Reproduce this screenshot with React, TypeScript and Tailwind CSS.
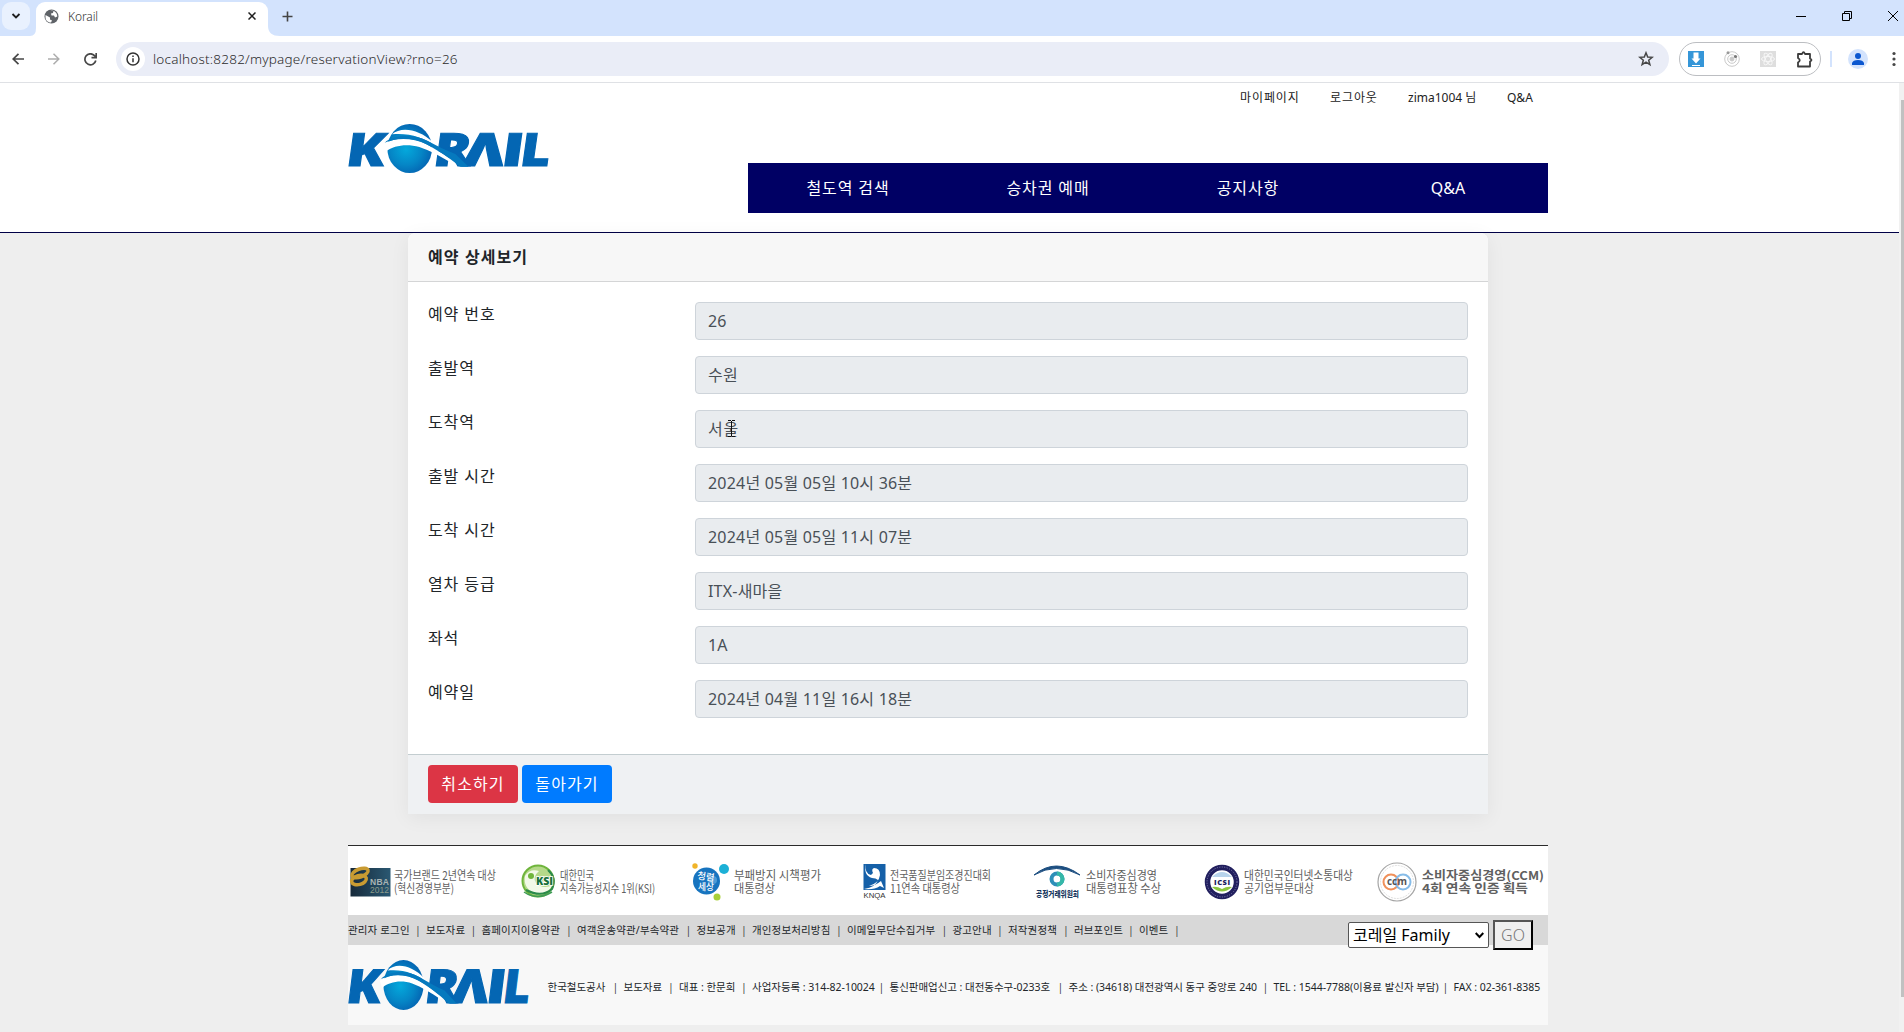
import React from "react";

const rows: [string, string][] = [
  ["예약 번호", "26"],
  ["출발역", "수원"],
  ["도착역", "서울"],
  ["출발 시간", "2024년 05월 05일 10시 36분"],
  ["도착 시간", "2024년 05월 05일 11시 07분"],
  ["열차 등급", "ITX-새마을"],
  ["좌석", "1A"],
  ["예약일", "2024년 04월 11일 16시 18분"],
];

const links: [string, string][] = [
  ["관리자 로그인", "w-[67px]"],
  ["보도자료", "w-[44.5px]"],
  ["홈페이지이용약관", "w-[84.5px]"],
  ["여객운송약관/부속약관", "w-[108.5px]"],
  ["정보공개", "w-[44.5px]"],
  ["개인정보처리방침", "w-[84px]"],
  ["이메일무단수집거부", "w-[94.5px]"],
  ["광고안내", "w-[44.5px]"],
  ["저작권정책", "w-[55px]"],
  ["러브포인트", "w-[54px]"],
  ["이벤트", "w-[35px]"],
];

const company: [string, string][] = [
  ["한국철도공사", "w-[65px]"],
  ["보도자료", "w-[44.5px]"],
  ["대표 : 한문희", "w-[62px]"],
  ["사업자등록 : 314-82-10024", "w-[126.5px]"],
  ["통신판매업신고 : 대전동수구-0233호", "w-[168px]"],
  ["주소 : (34618) 대전광역시 동구 중앙로 240", "w-[194px]"],
  ["TEL : 1544-7788(이용료 발신자 부담)", "w-[169px]"],
  ["FAX : 02-361-8385", "w-[84px]"],
];

function KorailLogo({ className, id }: { className: string; id: string }) {
  return (
    <svg
      className={className}
      viewBox="54 72 600 147"
      preserveAspectRatio="none"
      fontFamily="'Open Sans','Noto Sans',sans-serif"
      fontWeight="800"
      fontSize="138"
      fill="#0466b3"
    >
      <defs>
        <radialGradient id={id} gradientUnits="userSpaceOnUse" cx="228" cy="148" r="78">
          <stop offset="0" stopColor="#04a9dc" />
          <stop offset="0.6" stopColor="#0586c6" />
          <stop offset="1" stopColor="#0466b3" />
        </radialGradient>
      </defs>
      <g stroke="#0466b3" strokeWidth="3">
        <text transform="translate(44 199) skewX(-8)" textLength="116" lengthAdjust="spacingAndGlyphs">K</text>
        <text transform="translate(306 199) skewX(-8)" textLength="112" lengthAdjust="spacingAndGlyphs">R</text>
        <text transform="translate(396 199) skewX(-8)" textLength="122" lengthAdjust="spacingAndGlyphs">Λ</text>
        <text transform="translate(510 199) skewX(-8)" textLength="66" lengthAdjust="spacingAndGlyphs">I</text>
        <text transform="translate(566 199) skewX(-8)" textLength="90" lengthAdjust="spacingAndGlyphs">L</text>
      </g>
      <ellipse cx="239" cy="145.500" rx="67" ry="73.500" fill={`url(#${id})`} />
      <path d="M160 133C200 108 250 112 292 134C322 150 345 164 374 186L360 186C330 168 300 152 268 141C230 130 192 136 168 154Z" fill="#fff" />
      <path d="M186 103C214 78 268 88 308 126L318 138C280 112 236 98 186 103Z" fill="#fff" />
      <path d="M164 128C190 104 248 100 292 122C322 138 346 150 376 162L416 200H390C354 170 322 150 288 132C248 113 200 112 164 128Z" fill="#0579be" />
    </svg>
  );
}

function Lines({ x, w1, w2, a, b, bold }: { x: number; w1: number; w2: number; a: string; b: string; bold?: boolean }) {
  return (
    <g fill="#606060" fontSize="12" fontWeight={bold ? 600 : 400} fontFamily="'Noto Sans CJK KR',sans-serif">
      <text x={x} y="33.5" textLength={w1} lengthAdjust="spacingAndGlyphs">{a}</text>
      <text x={x} y="47" textLength={w2} lengthAdjust="spacingAndGlyphs">{b}</text>
    </g>
  );
}

const awardClass = "h-[69px] shrink-0";

function Awards() {
  return (
    <div className="flex h-[69px] bg-white">
      <svg className={awardClass} width="171" viewBox="0 0 171 69">
        <defs>
          <linearGradient id="nba" x1="0" x2="1">
            <stop offset="0" stopColor="#16293a" />
            <stop offset="1" stopColor="#2a5872" />
          </linearGradient>
        </defs>
        <rect x="2.500" y="22" width="40" height="28.500" fill="url(#nba)" />
        <g fill="none" stroke="#c99b32" strokeWidth="3.500">
          <ellipse cx="12" cy="27" rx="8.500" ry="4" transform="rotate(-20 12 27)" />
          <ellipse cx="11" cy="34" rx="7.500" ry="4.500" transform="rotate(-15 11 34)" />
        </g>
        <g fontFamily="'Liberation Sans',sans-serif" fontSize="8.500">
          <text x="22" y="39" fill="#a9b4b4" fontWeight="700" textLength="19">NBA</text>
          <text x="22" y="47" fill="#8b9a8a" textLength="19">2012</text>
        </g>
        <Lines x={46} w1={102} w2={60} a="국가브랜드 2년연속 대상" b="(혁신경영부분)" />
      </svg>
      <svg className={awardClass} width="171" viewBox="171 0 171 69">
        <circle cx="190" cy="35" r="15.500" fill="#b5d98a" stroke="#6fb53c" strokeWidth="2" />
        <path d="M177 30Q182 22 191 25Q184 31 188 37Q195 44 205 39Q198 50 186 47Q175 42 177 30Z" fill="#f2f9e8" />
        <circle cx="183" cy="30" r="3" fill="#6fb53c" />
        <path d="M200 24Q209 32 204 43Q194 52 178 44" fill="none" stroke="#2b8a4b" strokeWidth="2" />
        <path d="M176 46Q189 55 204 46" fill="none" stroke="#3f9b56" strokeWidth="1.500" />
        <text x="188" y="39" fontSize="10" fontWeight="800" fontFamily="'Open Sans',sans-serif" fill="#18703a" stroke="#fff" strokeWidth="1.500" paintOrder="stroke" textLength="17" lengthAdjust="spacingAndGlyphs">KSI</text>
        <Lines x={212} w1={34} w2={95} a="대한민국" b="지속가능성지수 1위(KSI)" />
      </svg>
      <svg className={awardClass} width="171" viewBox="342 0 171 69">
        <circle cx="358.500" cy="35" r="13.500" fill="#1774bf" />
        <circle cx="347" cy="20" r="2.700" fill="#f0b429" />
        <circle cx="376" cy="23" r="5" fill="#1cb0d6" />
        <circle cx="369" cy="51" r="3.500" fill="#a8cf38" />
        <circle cx="365" cy="34" r="4" fill="#4d9bd6" />
        <g fill="#fff" fontSize="9.500" fontWeight="500" fontFamily="'Noto Sans CJK KR',sans-serif">
          <text x="349" y="34" textLength="17" lengthAdjust="spacingAndGlyphs" transform="rotate(8 358 34)">청렴</text>
          <text x="350" y="44" textLength="16" lengthAdjust="spacingAndGlyphs">세상</text>
        </g>
        <Lines x={386} w1={87} w2={41} a="부패방지 시책평가" b="대통령상" />
      </svg>
      <svg className={awardClass} width="171" viewBox="513 0 171 69">
        <rect x="515.500" y="18" width="22" height="26" fill="#1560a8" />
        <path d="M518 18Q516 27 523 29L525 27Q523 23 526 22Q532 22 532 29Q531 37 521 40Q527 40 533 35L536 42L532 40Q526 44 516 43Q528 41 530 34Q528 32 524 32Q515 29 518 18Z" fill="#fff" />
        <text x="515.500" y="52" fontSize="8" fontFamily="'Liberation Sans',sans-serif" fill="#333" textLength="22" lengthAdjust="spacingAndGlyphs">KNQA</text>
        <Lines x={542} w1={101} w2={70} a="전국품질분임조경진대회" b="11연속 대통령상" />
      </svg>
      <svg className={awardClass} width="171" viewBox="684 0 171 69">
        <path d="M686 29Q708 11 732 29Q708 16 686 29Z" fill="#1c4e80" stroke="#1c4e80" />
        <circle cx="709" cy="33" r="5.500" fill="none" stroke="#2d8fb8" strokeWidth="4" />
        <path d="M709 27.500A5.500 5.500 0 0 1 709 38.500" fill="none" stroke="#35b8a8" strokeWidth="4" />
        <text x="688" y="50.500" fontSize="8" fontWeight="900" fontFamily="'Noto Sans CJK KR',sans-serif" fill="#17375e" textLength="43" lengthAdjust="spacingAndGlyphs">공정거래위원회</text>
        <Lines x={738} w1={71} w2={75} a="소비자중심경영" b="대통령표창 수상" />
      </svg>
      <svg className={awardClass} width="171" viewBox="855 0 171 69">
        <circle cx="874" cy="36" r="14.500" fill="#fff" stroke="#211f5e" strokeWidth="5.500" />
        <circle cx="874" cy="36" r="15" fill="none" stroke="#8583b5" strokeWidth="1" strokeDasharray="1 1.500" />
        <path d="M864 31Q874 21 884 31Z" fill="#b8d4ec" />
        <path d="M864 41Q874 50 884 41Q879 40 874 43Q869 40 864 41Z" fill="#8cc63f" />
        <text x="866" y="39" fontSize="7.500" fontWeight="800" fontFamily="'Open Sans',sans-serif" fill="#211f5e" textLength="16">ICSI</text>
        <Lines x={896} w1={109} w2={70} a="대한민국인터넷소통대상" b="공기업부문대상" />
      </svg>
      <svg className={awardClass} width="174" viewBox="1026 0 174 69">
        <circle cx="1049" cy="36" r="19" fill="none" stroke="#a5a5a5" strokeWidth="1.200" />
        <circle cx="1049" cy="36" r="16.500" fill="none" stroke="#d5d5d5" strokeWidth="0.800" strokeDasharray="2 1" />
        <circle cx="1043" cy="36" r="7.500" fill="none" stroke="#f0905a" strokeWidth="2" />
        <circle cx="1055" cy="36" r="7.500" fill="none" stroke="#86bce8" strokeWidth="2" />
        <text x="1039" y="39" fontSize="10" fontWeight="700" fontFamily="'Open Sans',sans-serif" fill="#555" textLength="20" lengthAdjust="spacingAndGlyphs">ccm</text>
        <Lines x={1074} w1={122} w2={106} a="소비자중심경영(CCM)" b="4회 연속 인증 획득" bold />
      </svg>
    </div>
  );
}

function Browser() {
  return (
    <div className="font-['Noto_Sans','Noto_Sans_CJK_KR',sans-serif]">
      <div className="flex h-9 bg-[#d3e3fd]">
        <div className="mt-[2px] ml-[2px] flex h-7 w-7 items-center justify-center rounded-[9px] bg-[#e9f1fe]">
          <svg width="10" height="10" viewBox="0 0 10 10" fill="none" stroke="#1f1f1f" strokeWidth="1.800">
            <path d="M1.500 3L5 6.500L8.500 3" />
          </svg>
        </div>
        <svg className="self-end" width="6" height="8" viewBox="0 0 6 8">
          <path d="M0 8Q6 8 6 0V8Z" fill="#fff" />
        </svg>
        <div className="mt-[2px] flex h-[34px] w-[232px] items-center rounded-t-[9px] bg-white pb-[5px]">
          <svg className="-mt-px ml-2" width="15" height="15" viewBox="0 0 15 15">
            <circle cx="7.500" cy="7.500" r="7" fill="#5f6368" />
            <path d="M1.500 6L6 8.500V10.500L8 11.500L7 13.500C3.500 13.500 1.500 11 1.500 8ZM6.500 1.800L9.500 1.800L9 4L7 4.500L7.500 6.500H10L11 8.500L13.300 7.500C13.300 4 10.500 1.500 7.500 1.500Z" fill="#fff" />
          </svg>
          <span className="ml-[9px] text-[12px] leading-4 font-light tracking-[-0.1px] text-[#333]">Korail</span>
          <svg className="-mt-px mr-3 ml-auto" width="8" height="8" viewBox="0 0 8 8" stroke="#1f1f1f" strokeWidth="1.500">
            <path d="M0.500 0.500L7.500 7.500M7.500 0.500L0.500 7.500" />
          </svg>
        </div>
        <svg className="self-end" width="12" height="10" viewBox="0 0 12 10">
          <path d="M0 0Q0 10 12 10H0Z" fill="#fff" />
        </svg>
        <svg className="mt-[11px] ml-[2px]" width="11" height="11" viewBox="0 0 11 11" stroke="#444" strokeWidth="1.600">
          <path d="M5.500 0.500V10.500M0.500 5.500H10.500" />
        </svg>
        <div className="mt-[11px] ml-auto flex items-start gap-9 pr-[6px]">
          <svg width="10" height="10" viewBox="0 0 10 10" shapeRendering="crispEdges">
            <path d="M0 5.500H10" stroke="#000" />
          </svg>
          <svg width="10" height="10" viewBox="0 0 10 10" fill="none" stroke="#000">
            <path d="M0.500 2.500H7.500V9.500H0.500ZM2.500 2.500V0.500H9.500V7.500H7.500" />
          </svg>
          <svg width="10" height="10" viewBox="0 0 10 10" stroke="#000">
            <path d="M0 0L10 10M10 0L0 10" />
          </svg>
        </div>
      </div>
      <div className="flex h-[47px] items-center border-b border-[#dfe1e5] bg-white">
        <svg className="ml-3" width="12" height="12" viewBox="0 0 12 12" fill="none" stroke="#474747" strokeWidth="1.700">
          <path d="M12 6H1M6.500 0.800L1.200 6L6.500 11.200" />
        </svg>
        <svg className="ml-6" width="12" height="12" viewBox="0 0 12 12" fill="none" stroke="#adadad" strokeWidth="1.500">
          <path d="M0 6H11M5.500 0.800L10.800 6L5.500 11.200" />
        </svg>
        <svg className="ml-6" width="13" height="13" viewBox="0 0 13 13" fill="none" stroke="#474747" strokeWidth="1.700">
          <path d="M11.800 7.500A5.500 5.500 0 1 1 10.500 2.600L12 4M12.200 0V4.700H7.500" />
        </svg>
        <div className="ml-[19px] flex h-[34px] w-[1553px] items-center rounded-full bg-[#eaedf7] pl-[5px]">
          <div className="flex h-6 w-6 items-center justify-center rounded-full bg-white">
            <svg width="14" height="14" viewBox="0 0 14 14" fill="none" stroke="#333" strokeWidth="1.500">
              <circle cx="7" cy="7" r="6" />
              <path d="M7 6.200V10.200M7 3.600V5" />
            </svg>
          </div>
          <span className="ml-2 text-[13.500px] font-light tracking-[0.22px] text-[#2a2a2a]">localhost:8282/mypage/reservationView?rno=26</span>
          <svg className="mr-[15px] ml-auto" width="16" height="16" viewBox="0 0 16 16" fill="none" stroke="#474747" strokeWidth="1.500">
            <path d="M8 1.800L9.700 6L14.200 6.300L10.700 9.200L11.900 13.700L8 11.200L4.100 13.700L5.300 9.200L1.800 6.300L6.300 6Z" />
          </svg>
        </div>
        <div className="ml-[10px] flex h-[34px] w-[142px] items-center rounded-full border border-[#bcbec2] pl-2">
          <svg width="16" height="16" viewBox="0 0 16 16">
            <rect width="16" height="16" fill="#3596d8" />
            <path d="M5.500 1.500H10.500V7.500H12.500L8 12.500L3.500 7.500H5.500ZM4 14H12V15H4Z" fill="#fff" />
          </svg>
          <svg className="ml-5" width="16" height="16" viewBox="0 0 16 16" fill="none" stroke="#c9c9c9">
            <circle cx="8" cy="8" r="7.300" />
            <circle cx="8" cy="8" r="4.300" />
            <circle cx="8" cy="8" r="2" fill="#c9c9c9" />
            <circle cx="11.500" cy="5.500" r="1.600" fill="#777" stroke="none" />
            <circle cx="4" cy="1.700" r="1.500" fill="#999" stroke="none" />
          </svg>
          <svg className="ml-5" width="16" height="16" viewBox="0 0 16 16" fill="none" stroke="#f8f8f8" strokeWidth="0.900">
            <rect width="16" height="16" fill="#dedede" stroke="none" />
            <ellipse cx="8" cy="8" rx="6.500" ry="2.600" />
            <ellipse cx="8" cy="8" rx="6.500" ry="2.600" transform="rotate(60 8 8)" />
            <ellipse cx="8" cy="8" rx="6.500" ry="2.600" transform="rotate(120 8 8)" />
          </svg>
          <svg className="ml-5" width="17" height="17" viewBox="0 0 17 17" fill="none" stroke="#3c3c3c" strokeWidth="1.800" strokeLinejoin="round">
            <path d="M2 3H6Q7.500 -0.500 9 3H14V7.500Q17 9 14 10.500V15.500H2V11.500Q5.500 9.200 2 7Z" />
          </svg>
        </div>
        <div className="ml-[9px] h-4 w-[2px] bg-[#d3e3fd]" />
        <div className="ml-4 flex h-5 w-5 items-center justify-center rounded-full bg-[#d3e3fd]">
          <svg width="12" height="12" viewBox="0 0 12 12" fill="#0b57d0">
            <circle cx="6" cy="3" r="3" />
            <path d="M0 12V10Q1 7 6 7Q11 7 12 10V12Z" />
          </svg>
        </div>
        <svg className="ml-6" width="4" height="16" viewBox="0 0 4 16" fill="#474747">
          <circle cx="2" cy="2.500" r="1.600" />
          <circle cx="2" cy="8" r="1.600" />
          <circle cx="2" cy="13.500" r="1.600" />
        </svg>
      </div>
    </div>
  );
}

export default function App() {
  return (
    <div className="h-[1032px] w-[1904px] overflow-hidden bg-[#eeeeee] font-['Noto_Sans','Noto_Sans_CJK_KR',sans-serif] text-[#212529]">
      <Browser />
      <div className="flex h-[949px]">
        <div className="w-[1899px]">
          <header className="h-[150px] border-b border-[#000046] bg-white pl-[348px]">
            <div className="flex w-[1200px] justify-between">
              <KorailLogo id="globe-top" className="mt-[41px] h-[49px] w-[200px] overflow-visible" />
              <div className="w-[800px]">
                <div className="flex h-[29px] pl-[492px] text-[12px] leading-[29px] text-[#222]">
                  <span className="w-[90px] tracking-[0.9px]">마이페이지</span>
                  <span className="w-[78px] tracking-[0.9px]">로그아웃</span>
                  <span className="w-[99px]">zima1004 님</span>
                  <span>Q&amp;A</span>
                </div>
                <nav className="mt-[51px] grid h-[50px] grid-cols-4 bg-[#000064] text-center text-[16px] leading-[50px] text-white">
                  <span className="tracking-[0.9px]">철도역 검색</span>
                  <span className="tracking-[0.9px]">승차권 예매</span>
                  <span className="tracking-[0.9px]">공지사항</span>
                  <span>Q&amp;A</span>
                </nav>
              </div>
            </div>
          </header>

          <main className="relative ml-[408px] h-[581px] w-[1080px] rounded-t-lg bg-white shadow-[0_4px_20px_rgba(0,0,0,0.06)]">
            <h1 className="h-[49px] rounded-t-lg border-b border-[#d4d5d6] bg-[#f7f7f7] pl-5 text-[16px] leading-[48px] font-semibold tracking-[1.1px]">예약 상세보기</h1>
            <div className="flex h-[472px] flex-col gap-4 px-5 pt-5">
              {rows.map(([label, value]) => (
                <div key={label} className="flex h-[38px]">
                  <span className="w-[267px] text-[16px] leading-6 tracking-[0.9px]">{label}</span>
                  <div className="h-[38px] w-[773px] rounded border border-[#ced4da] bg-[#e9ecef] pl-3 text-[16px] leading-[37px] tracking-[0.2px] text-[#495057]">
                    {label === "도착역" ? (
                      <span className="relative tracking-[0.9px]">
                        {value}
                        <svg className="absolute top-[2px] left-[20px]" width="7" height="17" viewBox="0 0 7 17" fill="none" stroke="#111" shapeRendering="crispEdges">
                          <path d="M0 0.500H3M4 0.500H7M3.500 1V16M0 16.500H3M4 16.500H7" />
                        </svg>
                      </span>
                    ) : (
                      value
                    )}
                  </div>
                </div>
              ))}
            </div>
            <div className="flex h-[60px] gap-1 border-t border-[#c3cdd0] bg-[#eff1f3] px-5 pt-[10px] text-center text-[16px] leading-[37px] text-white">
              <button className="h-[38px] w-[90px] rounded bg-[#dc3545] tracking-[1.1px]">취소하기</button>
              <button className="h-[38px] w-[90px] rounded bg-[#007bff] tracking-[1.1px]">돌아가기</button>
            </div>
          </main>

          <footer className="mt-[31px] ml-[348px] w-[1200px] border-t border-[#2b2b2b]">
            <Awards />
            <div className="flex h-[30px] bg-[#d8d8d8] text-[10.500px] leading-[30px] tracking-[0.15px]">
              {links.map(([text, width]) => (
                <React.Fragment key={text}>
                  <span className={`${width} shrink-0 whitespace-nowrap`}>{text}</span>
                  <span className="w-[11px] shrink-0 text-[#444]">|</span>
                </React.Fragment>
              ))}
              <div className="mt-[5px] mr-[15px] ml-auto flex h-[30px] w-[185px] items-center justify-between tracking-normal">
                <div className="flex h-[26px] w-[141px] items-center justify-between rounded-[2px] border border-[#555] bg-white pr-1 pl-1 text-[16px] text-black">
                  <span className="leading-6">코레일 Family</span>
                  <svg width="9" height="7" viewBox="0 0 9 7" fill="none" stroke="#000" strokeWidth="2">
                    <path d="M0.700 1L4.500 5L8.300 1" />
                  </svg>
                </div>
                <button className="h-[30px] w-10 border-2 border-t-[#555] border-r-black border-b-black border-l-[#555] bg-[#efefef] text-[16px] leading-[26px] font-light text-[#777]">GO</button>
              </div>
            </div>
            <div className="flex h-20 items-center bg-[#f8f8f8] text-[10.500px] leading-4">
              <KorailLogo id="globe-bottom" className="mr-[19.5px] h-[50px] w-[180px] shrink-0 overflow-visible" />
              {company.map(([text, width], i) => (
                <React.Fragment key={text}>
                  {i > 0 && <span className="mt-1 w-[11px] shrink-0 text-[#444]">|</span>}
                  <span className={`${width} mt-1 shrink-0 whitespace-nowrap tracking-[-0.03px]`}>{text}</span>
                </React.Fragment>
              ))}
            </div>
          </footer>
        </div>
        <div className="w-[5px] bg-[#f1f1f1] pt-[17px] pl-[2px]">
          <div className="h-[897px] bg-[#c1c1c1]" />
        </div>
      </div>
    </div>
  );
}
